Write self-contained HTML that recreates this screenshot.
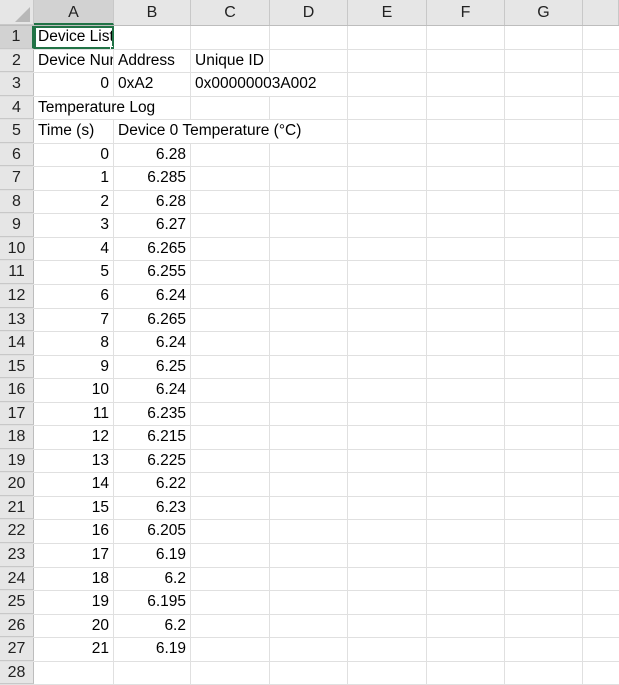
<!DOCTYPE html>
<html><head><meta charset="utf-8"><style>
*{box-sizing:border-box;margin:0;padding:0}
body{width:619px;height:664px;overflow:hidden;background:#fff;font-family:"Liberation Sans",Arial,sans-serif;font-size:15.5px;color:#000}
.r{display:flex;height:23.55px;border-bottom:1px solid #e0e0e0;white-space:nowrap}
.r>div{border-right:1px solid #e0e0e0;height:100%;line-height:22px;overflow:visible;padding:0 4px;position:relative}
.r>div:nth-child(1){width:34px;background:#e6e6e6;border-right:1px solid #bdbdbd;text-align:center;padding:0;color:#222;border-bottom:1px solid #c8c8c8;font-size:16px}
.r>div:nth-child(2){width:80px}
.r>div:nth-child(3){width:77px}
.r>div:nth-child(4){width:79px}
.r>div:nth-child(5){width:78px}
.r>div:nth-child(6){width:79px}
.r>div:nth-child(7){width:78px}
.r>div:nth-child(8){width:78px}
.r>div:nth-child(9){flex:1;border-right:none}
.n{text-align:right}
.h{height:26px;background:#e6e6e6;border-bottom:1px solid #bdbdbd}
.h>div{text-align:center;background:#e6e6e6;line-height:26px;border-right:1px solid #c8c8c8!important;color:#222;font-size:16px}
.sel{background:#d2d2d2!important;border-bottom:2px solid #217346!important}
.selr{background:#d2d2d2!important;border-right:2px solid #217346!important}
</style></head><body>
<div class="r h"><div style="position:relative"><svg width="34" height="26" style="position:absolute;left:0;top:0"><polygon points="30,7 30,22 15,22" fill="#b8b8b8"/></svg></div><div class="sel">A</div><div>B</div><div>C</div><div>D</div><div>E</div><div>F</div><div>G</div><div></div></div>
<div class="r"><div class="selr">1</div><div style="outline:2px solid #217346;outline-offset:-2px;padding-left:4px;overflow:hidden">Device List<span style="position:absolute;right:-3px;bottom:-3px;width:6px;height:6px;background:#217346;border:1px solid #fff"></span></div><div></div><div></div><div></div><div></div><div></div><div></div><div></div></div>
<div class="r"><div>2</div><div style="overflow:hidden">Device Number</div><div>Address</div><div>Unique ID</div><div></div><div></div><div></div><div></div><div></div></div>
<div class="r"><div>3</div><div class="n">0</div><div>0xA2</div><div style="border-right:none">0x00000003A002</div><div></div><div></div><div></div><div></div><div></div></div>
<div class="r"><div>4</div><div style="border-right:none">Temperature Log</div><div></div><div></div><div></div><div></div><div></div><div></div><div></div></div>
<div class="r"><div>5</div><div>Time (s)</div><div style="border-right:none">Device 0 Temperature (°C)</div><div style="border-right:none"></div><div></div><div></div><div></div><div></div><div></div></div>
<div class="r"><div>6</div><div class="n">0</div><div class="n">6.28</div><div></div><div></div><div></div><div></div><div></div><div></div></div>
<div class="r"><div>7</div><div class="n">1</div><div class="n">6.285</div><div></div><div></div><div></div><div></div><div></div><div></div></div>
<div class="r"><div>8</div><div class="n">2</div><div class="n">6.28</div><div></div><div></div><div></div><div></div><div></div><div></div></div>
<div class="r"><div>9</div><div class="n">3</div><div class="n">6.27</div><div></div><div></div><div></div><div></div><div></div><div></div></div>
<div class="r"><div>10</div><div class="n">4</div><div class="n">6.265</div><div></div><div></div><div></div><div></div><div></div><div></div></div>
<div class="r"><div>11</div><div class="n">5</div><div class="n">6.255</div><div></div><div></div><div></div><div></div><div></div><div></div></div>
<div class="r"><div>12</div><div class="n">6</div><div class="n">6.24</div><div></div><div></div><div></div><div></div><div></div><div></div></div>
<div class="r"><div>13</div><div class="n">7</div><div class="n">6.265</div><div></div><div></div><div></div><div></div><div></div><div></div></div>
<div class="r"><div>14</div><div class="n">8</div><div class="n">6.24</div><div></div><div></div><div></div><div></div><div></div><div></div></div>
<div class="r"><div>15</div><div class="n">9</div><div class="n">6.25</div><div></div><div></div><div></div><div></div><div></div><div></div></div>
<div class="r"><div>16</div><div class="n">10</div><div class="n">6.24</div><div></div><div></div><div></div><div></div><div></div><div></div></div>
<div class="r"><div>17</div><div class="n">11</div><div class="n">6.235</div><div></div><div></div><div></div><div></div><div></div><div></div></div>
<div class="r"><div>18</div><div class="n">12</div><div class="n">6.215</div><div></div><div></div><div></div><div></div><div></div><div></div></div>
<div class="r"><div>19</div><div class="n">13</div><div class="n">6.225</div><div></div><div></div><div></div><div></div><div></div><div></div></div>
<div class="r"><div>20</div><div class="n">14</div><div class="n">6.22</div><div></div><div></div><div></div><div></div><div></div><div></div></div>
<div class="r"><div>21</div><div class="n">15</div><div class="n">6.23</div><div></div><div></div><div></div><div></div><div></div><div></div></div>
<div class="r"><div>22</div><div class="n">16</div><div class="n">6.205</div><div></div><div></div><div></div><div></div><div></div><div></div></div>
<div class="r"><div>23</div><div class="n">17</div><div class="n">6.19</div><div></div><div></div><div></div><div></div><div></div><div></div></div>
<div class="r"><div>24</div><div class="n">18</div><div class="n">6.2</div><div></div><div></div><div></div><div></div><div></div><div></div></div>
<div class="r"><div>25</div><div class="n">19</div><div class="n">6.195</div><div></div><div></div><div></div><div></div><div></div><div></div></div>
<div class="r"><div>26</div><div class="n">20</div><div class="n">6.2</div><div></div><div></div><div></div><div></div><div></div><div></div></div>
<div class="r"><div>27</div><div class="n">21</div><div class="n">6.19</div><div></div><div></div><div></div><div></div><div></div><div></div></div>
<div class="r"><div>28</div><div></div><div></div><div></div><div></div><div></div><div></div><div></div><div></div></div>
</body></html>
